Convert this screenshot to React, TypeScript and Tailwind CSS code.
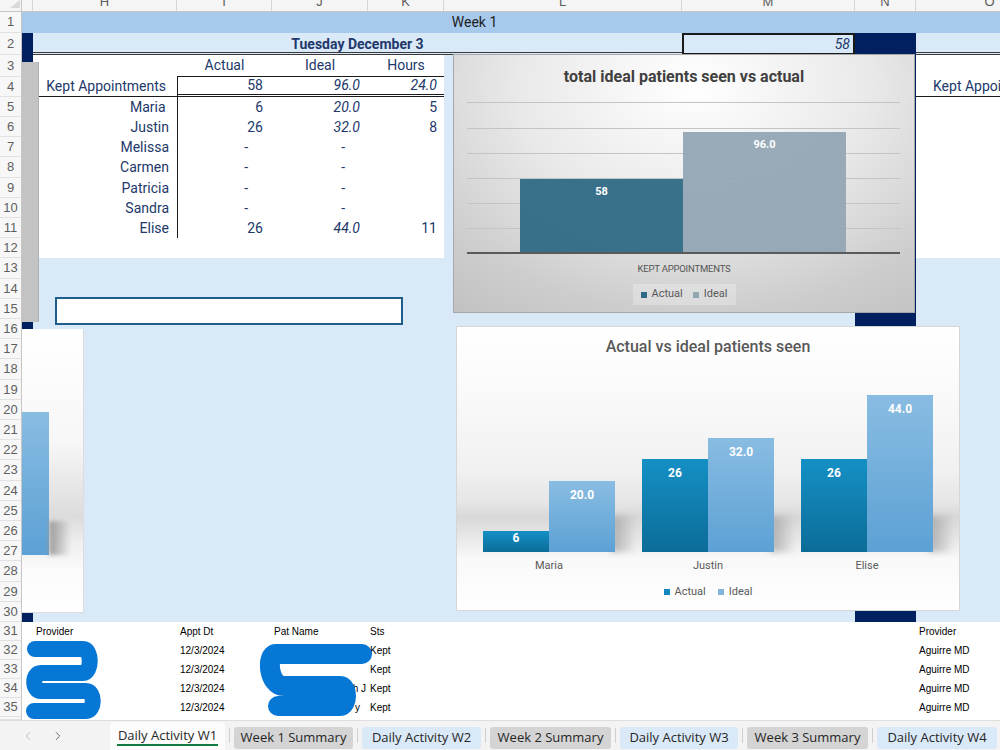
import { ChevronLeft, ChevronRight } from "lucide-react";

const ROW_HEIGHTS = [
  "h-[21px]", "h-[22px]", "h-[22px]",
  "h-[20px]", "h-[20px]", "h-[20px]", "h-[20px]", "h-[21px]",
  "h-[20px]", "h-[20px]", "h-[20px]", "h-[20px]", "h-[21px]",
  "h-[20px]", "h-[20px]", "h-[20px]", "h-[20px]", "h-[21px]",
  "h-[20px]", "h-[20px]", "h-[20px]", "h-[20px]", "h-[21px]",
  "h-[20px]", "h-[20px]", "h-[20px]", "h-[20px]", "h-[21px]",
  "h-[20px]", "h-[20px]",
  "h-[19px]", "h-[19px]", "h-[19px]", "h-[19px]", "h-[19px]",
  "h-[3px]",
];

const COLUMNS = [
  { name: "", w: "w-[11px]" },
  { name: "H", w: "w-[144px]" },
  { name: "I", w: "w-[95px]" },
  { name: "J", w: "w-[96px]" },
  { name: "K", w: "w-[76px]" },
  { name: "L", w: "w-[238px]" },
  { name: "M", w: "w-[173px]" },
  { name: "N", w: "w-[61px]" },
  { name: "O", w: "w-[148px]" },
];

const providers = [
  { name: "Maria\u00a0", actual: "6", ideal: "20.0", hours: "5" },
  { name: "Justin", actual: "26", ideal: "32.0", hours: "8" },
  { name: "Melissa", actual: "-", ideal: "-", hours: "" },
  { name: "Carmen", actual: "-", ideal: "-", hours: "" },
  { name: "Patricia", actual: "-", ideal: "-", hours: "" },
  { name: "Sandra", actual: "-", ideal: "-", hours: "" },
  { name: "Elise", actual: "26", ideal: "44.0", hours: "11" },
];

const perProvider = [
  { name: "Maria", actual: 6, ideal: 20 },
  { name: "Justin", actual: 26, ideal: 32 },
  { name: "Elise", actual: 26, ideal: 44 },
];

const appointments = [
  { tail: "" },
  { tail: "" },
  { tail: "h J" },
  { tail: "y" },
];

const tabs = [
  { label: "Week 1 Summary", w: "w-[119px]", bg: "bg-[#d4d4d4]" },
  { label: "Daily Activity W2", w: "w-[119px]", bg: "bg-[#dae9f8]" },
  { label: "Week 2 Summary", w: "w-[121px]", bg: "bg-[#d4d4d4]" },
  { label: "Daily Activity W3", w: "w-[118px]", bg: "bg-[#dae9f8]" },
  { label: "Week 3 Summary", w: "w-[121px]", bg: "bg-[#d4d4d4]" },
  { label: "Daily Activity W4", w: "w-[120px]", bg: "bg-[#dae9f8]" },
];

function ColumnHeader() {
  return (
    <div className="flex h-[12px] shrink-0 overflow-hidden bg-[#f5f5f5] border-b border-[#c6c6c6] font-['Liberation_Sans',Arial,sans-serif] text-[13px] text-[#5c5c5c]">
      <div className="w-[22px] shrink-0 border-r border-[#c6c6c6] flex justify-end">
        <svg width="14" height="10" viewBox="0 0 14 10">
          <path d="M13 0 V8 H3 Z" fill="#d9d9d9" />
        </svg>
      </div>
      {COLUMNS.map((c, i) => (
        <div key={i} className={`${c.w} shrink-0 border-r border-[#d6d6d6] text-center leading-[12px]`}>
          <span className="relative -top-[4px]">{c.name}</span>
        </div>
      ))}
    </div>
  );
}

function RowHeader() {
  return (
    <div className="w-[22px] shrink-0 flex flex-col overflow-hidden bg-[#f7f7f7] border-r border-[#c6c6c6] font-['Liberation_Sans',Arial,sans-serif] text-[13px] text-[#5f5f5f]">
      {ROW_HEIGHTS.map((h, i) => (
        <div key={i} className={`${h} shrink-0 border-b border-[#e2e2e2] flex items-center pl-[3px] overflow-hidden`}>
          {/* the last row only peeks out above the sheet tabs */}
          {i < 35 && <span className="w-[15px] text-center">{i + 1}</span>}
        </div>
      ))}
    </div>
  );
}

function TotalsChart() {
  const gridTops = ["top-[0px]", "top-[26px]", "top-[51px]", "top-[76px]", "top-[101px]", "top-[126px]"];
  return (
    <div className="absolute left-[431px] top-[42px] w-[462px] h-[259px] border border-[#a8a8a8] bg-[radial-gradient(ellipse_85%_110%_at_52%_12%,#ffffff_0%,#e9e9e9_45%,#cdcdcd_80%,#c2c2c2_100%)] flex flex-col items-center font-['Roboto',sans-serif]">
      <div className="mt-[12px] h-[20px] leading-[20px] text-[16px] font-bold text-[#404040]">
        total ideal patients seen vs actual
      </div>
      <div className="relative self-start ml-[13px] mt-[15px] w-[433px] h-[152px]">
        {gridTops.map((t) => (
          <div key={t} className={`absolute left-0 right-0 ${t} h-px bg-[#c4c4c4]`} />
        ))}
        <div className="absolute left-0 right-0 top-[150px] h-[2px] bg-[#5a5a5a]" />
        <div className="absolute left-[53px] bottom-[2px] flex items-end">
          <div className="w-[163px] h-[73px] bg-[#2f6a86]/95 flex justify-center pt-[6px]">
            <span className="text-[11px] leading-[14px] font-bold text-white">58</span>
          </div>
          <div className="w-[163px] h-[120px] bg-[#93a6b4]/95 flex justify-center pt-[6px]">
            <span className="text-[11px] leading-[14px] font-bold text-white">96.0</span>
          </div>
        </div>
      </div>
      <div className="mt-[9px] h-[12px] leading-[12px] text-[9.5px] text-[#555] tracking-[-0.2px]">KEPT APPOINTMENTS</div>
      <div className="mt-[9px] h-[21px] w-[103px] bg-white/25 flex items-center justify-center gap-[6px] text-[11px] text-[#595959]">
        <span className="flex items-center gap-[5px]">
          <span className="w-[6px] h-[6px] bg-[#2f6a86]" />
          Actual
        </span>
        <span className="flex items-center gap-[5px] ml-[4px]">
          <span className="w-[6px] h-[6px] bg-[#93a6b4]" />
          Ideal
        </span>
      </div>
    </div>
  );
}

function ProviderBar({ value, label, actual }: { value: number; label: string; actual: boolean }) {
  const h = Math.round(value * 3.57);
  const pad = Math.min(7, Math.max(0, h - 21));
  return (
    <div
      className={`w-[66px] flex justify-center ${
        actual
          ? "bg-[linear-gradient(#1490c5,#0c6c98)]"
          : "bg-[linear-gradient(#89bce2,#5ca1d5)]"
      }`}
      style={{ height: h, paddingTop: pad }}
    >
      <span className="text-[12px] leading-[14px] font-bold text-white">{label}</span>
    </div>
  );
}

function ProvidersChart() {
  return (
    <div className="absolute left-[434px] top-[314px] w-[504px] h-[285px] border border-[#d6d6d6] bg-[linear-gradient(to_bottom,#ffffff_0%,#fafafa_22%,#f1f1f1_50%,#e6e6e6_62%,#d8d8d8_67%,#e9e9e9_75%,#f9f9f9_82%,#ffffff_100%)] flex flex-col font-['Roboto',sans-serif]">
      <div className="mt-[10px] h-[20px] leading-[20px] text-center text-[16px] font-medium text-[#595959]">
        Actual vs ideal patients seen
      </div>
      <div className="h-[195px] flex items-end gap-[27px] px-[26px]">
        {perProvider.map((p) => (
          <div key={p.name} className="relative w-[132px] flex items-end">
            <div className="absolute -right-[22px] bottom-0 w-[26px] h-[36px] bg-[linear-gradient(to_right,#9d9d9d,rgba(200,200,200,0))] blur-[3px] opacity-80" />
            <div className="relative flex items-end">
              <ProviderBar value={p.actual} label={String(p.actual)} actual />
              <ProviderBar value={p.ideal} label={p.ideal.toFixed(1)} actual={false} />
            </div>
          </div>
        ))}
      </div>
      <div className="mt-[7px] h-[14px] flex gap-[27px] px-[26px] text-[11px] leading-[14px] text-[#595959]">
        {perProvider.map((p) => (
          <div key={p.name} className="w-[132px] text-center">{p.name}</div>
        ))}
      </div>
      <div className="mt-[12px] h-[14px] flex items-center justify-center gap-[12px] text-[11px] text-[#595959]">
        <span className="flex items-center gap-[5px]">
          <span className="w-[6px] h-[6px] bg-[#1189c0]" />
          Actual
        </span>
        <span className="flex items-center gap-[5px]">
          <span className="w-[6px] h-[6px] bg-[#7fb5de]" />
          Ideal
        </span>
      </div>
    </div>
  );
}

function SideCharts() {
  return (
    <>
      {/* edges of the charts for the previous day, scrolled mostly out of view */}
      <div className="absolute left-0 top-[50px] w-[17px] h-[260px] bg-[#c3c3c3] border-r border-[#b0b0b0]" />
      <div className="absolute left-0 top-[317px] w-[62px] h-[284px] border-r border-b border-[#dcdcdc] bg-[linear-gradient(to_bottom,#ffffff_0%,#f7f7f7_40%,#dcdcdc_66%,#efefef_76%,#fbfbfb_85%,#ffffff_100%)] flex items-start">
        <div className="mt-[83px] w-[27px] h-[143px] bg-[linear-gradient(#89bce2,#5ca1d5)]" />
        <div className="mt-[192px] w-[22px] h-[34px] bg-[linear-gradient(to_right,#9a9a9a,rgba(200,200,200,0))] blur-[2px]" />
      </div>
    </>
  );
}

function Redactions() {
  return (
    <svg
      className="absolute left-0 top-[610px] pointer-events-none"
      width="400"
      height="100"
      viewBox="22 622 400 100"
    >
      <g fill="none" stroke="#0677d4" strokeLinecap="round" strokeLinejoin="round">
        <path strokeWidth="16" d="M35 649 H83 C92 649 92 673 83 673 H41 C32 673 32 691 41 691 H86 C95 691 95 711 86 711 H34" />
        <path strokeWidth="20" d="M362 654 H276 C266 654 268 686 284 686 H340 C348 686 348 706 340 706 H278" />
      </g>
    </svg>
  );
}

function Sheet() {
  const text = "font-['Roboto',sans-serif] text-[14px] text-[#22386a]";
  return (
    <div className="relative flex-1 overflow-hidden">
      <div className="flex flex-col w-[1100px]">
        {/* row 1 */}
        <div className={`flex shrink-0 ${ROW_HEIGHTS[0]} bg-[#a6c9ec]`}>
          <div className="w-[11px] shrink-0" />
          <div className="w-[883px] shrink-0 flex items-center justify-center font-['Roboto',sans-serif] text-[14px] text-[#222]">
            Week 1
          </div>
        </div>

        {/* row 2 */}
        <div className={`flex shrink-0 ${ROW_HEIGHTS[1]}`}>
          <div className="w-[11px] shrink-0 bg-[#002060]" />
          <div className={`w-[649px] shrink-0 bg-[#dae9f8] border-b-[3px] border-double border-[#3a3a3a] flex items-center justify-center pt-[3px] font-bold ${text}`}>
            Tuesday December 3
          </div>
          <div className={`w-[173px] shrink-0 bg-[#dae9f8] border-2 border-[#1a1a1a] flex items-center justify-end pr-[3px] italic ${text} text-[#2d4a88]`}>
            58
          </div>
          <div className="w-[61px] shrink-0 bg-[#002060]" />
          <div className="flex-1 bg-[#dae9f8] border-b-[3px] border-double border-[#3a3a3a]" />
        </div>

        {/* row 3: headings */}
        <div className={`flex shrink-0 ${ROW_HEIGHTS[2]} ${text}`}>
          <div className="w-[11px] shrink-0 bg-[#002060]" />
          <div className="w-[144px] shrink-0 bg-white" />
          <div className="w-[95px] shrink-0 bg-white border-b border-[#1a1a1a] flex items-center justify-center">Actual</div>
          <div className="w-[96px] shrink-0 bg-white border-b border-[#1a1a1a] flex items-center justify-center">Ideal</div>
          <div className="w-[76px] shrink-0 bg-white border-b border-[#1a1a1a] flex items-center justify-center">Hours</div>
          <div className="w-[238px] shrink-0 bg-[#dae9f8]" />
          <div className="w-[173px] shrink-0 bg-[#dae9f8]" />
          <div className="w-[61px] shrink-0 bg-[#002060]" />
          <div className="flex-1 bg-white" />
        </div>

        {/* row 4: totals */}
        <div className={`flex shrink-0 ${ROW_HEIGHTS[3]} ${text}`}>
          <div className="w-[11px] shrink-0 bg-[#002060]" />
          <div className="w-[144px] shrink-0 bg-white border-b border-[#1a1a1a] flex items-center justify-end pr-[11px]">Kept Appointments</div>
          <div className="w-[95px] shrink-0 bg-white border-l border-[#1a1a1a] border-b-[3px] border-double flex items-center justify-end pr-[9px]">58</div>
          <div className="w-[96px] shrink-0 bg-white border-b-[3px] border-double border-[#1a1a1a] flex items-center justify-end pr-[8px] italic">96.0</div>
          <div className="w-[76px] shrink-0 bg-white border-b-[3px] border-double border-[#1a1a1a] flex items-center justify-end pr-[7px] italic">24.0</div>
          <div className="w-[238px] shrink-0 bg-[#dae9f8]" />
          <div className="w-[173px] shrink-0 bg-[#dae9f8]" />
          <div className="w-[61px] shrink-0 bg-[#002060]" />
          <div className="flex-1 bg-white border-b border-[#1a1a1a] flex items-center pl-[17px] whitespace-nowrap">Kept Appointments</div>
        </div>

        {/* rows 5-11: providers */}
        {providers.map((p, i) => (
          <div key={p.name} className={`flex shrink-0 ${ROW_HEIGHTS[4 + i]} ${text}`}>
            <div className="w-[11px] shrink-0 bg-[#002060]" />
            <div className="w-[144px] shrink-0 bg-white flex items-center justify-end pr-[8px] whitespace-pre">{p.name}</div>
            <div className={`w-[95px] shrink-0 bg-white border-l border-[#1a1a1a] flex items-center justify-end ${p.actual === "-" ? "pr-[24px]" : "pr-[9px]"}`}>
              {p.actual}
            </div>
            <div className={`w-[96px] shrink-0 bg-white flex items-center justify-end ${p.ideal === "-" ? "pr-[23px]" : "pr-[8px] italic"}`}>
              {p.ideal}
            </div>
            <div className="w-[76px] shrink-0 bg-white flex items-center justify-end pr-[7px]">{p.hours}</div>
            <div className="w-[238px] shrink-0 bg-[#dae9f8]" />
            <div className="w-[173px] shrink-0 bg-[#dae9f8]" />
            <div className="w-[61px] shrink-0 bg-[#002060]" />
            <div className="flex-1 bg-white" />
          </div>
        ))}

        {/* row 12 */}
        <div className={`flex shrink-0 ${ROW_HEIGHTS[11]}`}>
          <div className="w-[11px] shrink-0 bg-[#002060]" />
          <div className="w-[411px] shrink-0 bg-white" />
          <div className="w-[411px] shrink-0 bg-[#dae9f8]" />
          <div className="w-[61px] shrink-0 bg-[#002060]" />
          <div className="flex-1 bg-white" />
        </div>

        {/* rows 13-30 */}
        {ROW_HEIGHTS.slice(12, 30).map((h, i) => (
          <div key={i} className={`flex shrink-0 ${h}`}>
            <div className="w-[11px] shrink-0 bg-[#002060]" />
            <div className="w-[822px] shrink-0 bg-[#dae9f8]" />
            <div className="w-[61px] shrink-0 bg-[#002060]" />
            <div className="flex-1 bg-[#dae9f8]" />
          </div>
        ))}

        {/* rows 31-35: appointment detail */}
        <div className="flex flex-col bg-white font-['Liberation_Sans',Arial,sans-serif] text-[10px] text-black">
          <div className={`flex shrink-0 ${ROW_HEIGHTS[30]} items-center`}>
            <div className="w-[11px] shrink-0" />
            <div className="w-[144px] shrink-0 pl-[3px]">Provider</div>
            <div className="w-[95px] shrink-0 pl-[3px]">Appt Dt</div>
            <div className="w-[96px] shrink-0 pl-[2px]">Pat Name</div>
            <div className="w-[76px] shrink-0 pl-[2px]">Sts</div>
            <div className="w-[472px] shrink-0" />
            <div className="flex-1 pl-[3px]">Provider</div>
          </div>
          {appointments.map((a, i) => (
            <div key={i} className={`flex shrink-0 ${ROW_HEIGHTS[31 + i]} items-center`}>
              <div className="w-[11px] shrink-0" />
              <div className="w-[144px] shrink-0" />
              <div className="w-[95px] shrink-0 pl-[3px]">12/3/2024</div>
              <div className={`w-[96px] shrink-0 text-right ${a.tail === "y" ? "pr-[8px]" : "pr-[2px]"}`}>{a.tail}</div>
              <div className="w-[76px] shrink-0 pl-[2px]">Kept</div>
              <div className="w-[472px] shrink-0" />
              <div className="flex-1 pl-[3px]">Aguirre MD</div>
            </div>
          ))}
          <div className={`shrink-0 ${ROW_HEIGHTS[35]}`} />
        </div>
      </div>

      <SideCharts />
      <div className="absolute left-[33px] top-[285px] w-[348px] h-[28px] bg-white border-2 border-[#1f5d8c]" />
      <TotalsChart />
      <ProvidersChart />
      <Redactions />
    </div>
  );
}

function SheetTabs() {
  return (
    <div className="h-[30px] shrink-0 flex bg-[#f3f3f3] border-t border-[#dedede] font-['Open_Sans',sans-serif] text-[13px] text-[#262626]">
      <div className="w-[110px] shrink-0 flex items-center pl-[21px] gap-[16px]">
        <ChevronLeft size={14} strokeWidth={1.5} className="text-[#b5b5b5]" />
        <ChevronRight size={14} strokeWidth={1.5} className="text-[#555]" />
      </div>
      <div className="w-[115px] shrink-0 mt-[1px] bg-[#fcfcfc] rounded-t-[4px] flex flex-col items-center pt-[4px]">
        <span className="leading-[18px]">Daily Activity W1</span>
        <span className="w-[101px] h-[2px] bg-[#107c41]" />
      </div>
      {tabs.map((t) => (
        <div key={t.label} className="flex shrink-0 items-center">
          <span className="mx-[4px] w-px h-[15px] bg-[#cfcfcf]" />
          <div className={`${t.w} h-[22px] mt-[4px] rounded-[3px] ${t.bg} flex items-center justify-center`}>
            {t.label}
          </div>
        </div>
      ))}
    </div>
  );
}

export default function App() {
  return (
    <div className="w-[1000px] h-[750px] overflow-hidden bg-white flex flex-col">
      <ColumnHeader />
      <div className="flex h-[708px] shrink-0">
        <RowHeader />
        <Sheet />
      </div>
      <SheetTabs />
    </div>
  );
}
